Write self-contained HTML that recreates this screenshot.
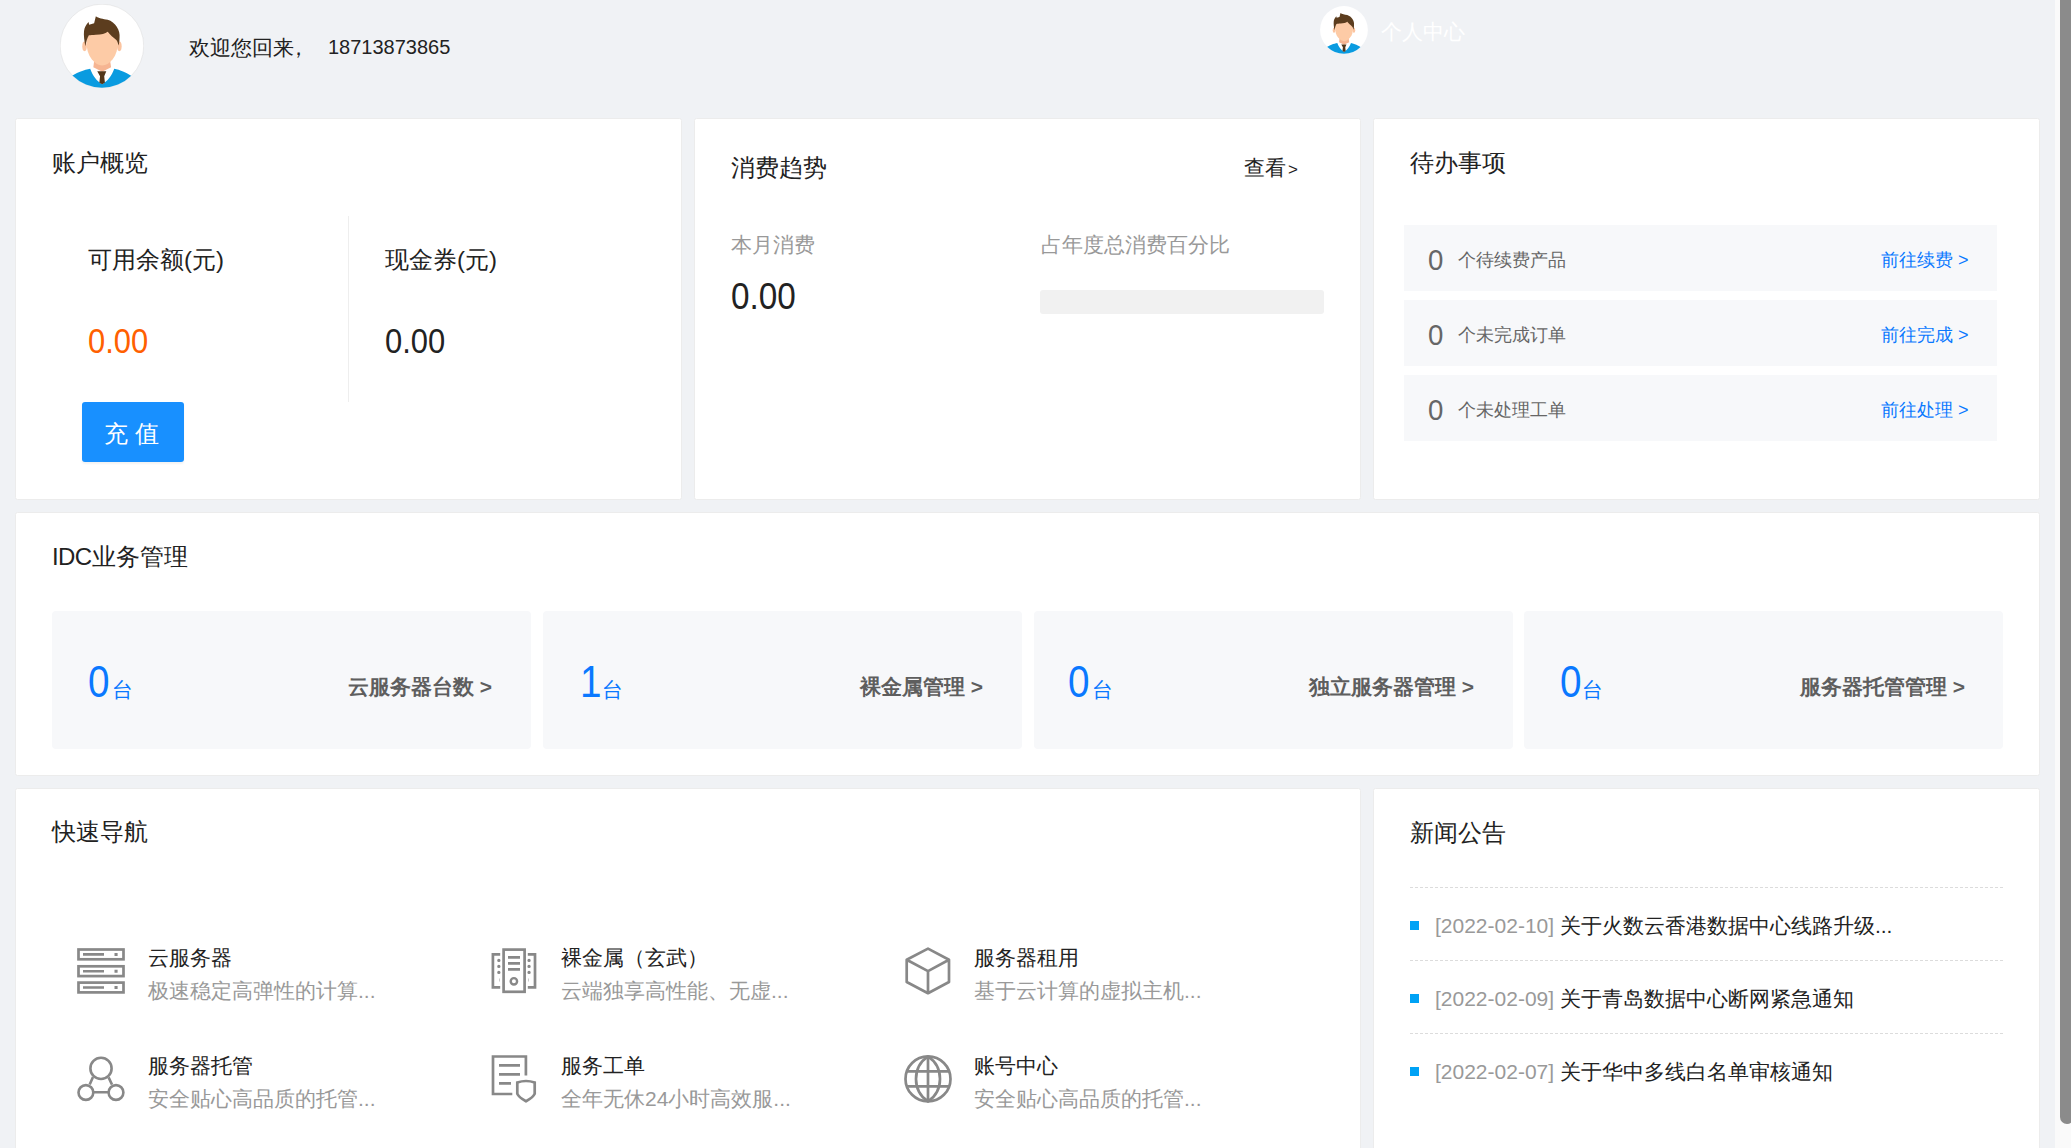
<!DOCTYPE html>
<html><head><meta charset="utf-8">
<style>
*{margin:0;padding:0;box-sizing:border-box}
html,body{width:2071px;height:1148px;overflow:hidden;background:#f0f2f5}
body{position:relative;font-family:"Liberation Sans",sans-serif;color:#333}
.a{position:absolute;white-space:nowrap;line-height:1}
.card{position:absolute;background:#fff;border:1px solid #ececec;border-radius:2.5px}
.t24{font-size:24px;color:#222}
.sb{position:absolute;left:2055px;top:0;width:16px;height:1148px;background:#fafafa}
.th{position:absolute;left:2060px;top:-10px;width:14px;height:1134px;background:#8b8b8b;border-radius:7px}
.row{position:absolute;left:1404px;width:593px;height:66px;background:#f7f8fa}
.box{position:absolute;top:611px;width:479px;height:138px;background:#f7f8fa;border-radius:4px}
.blue{color:#0a78ff}
.dash{position:absolute;left:1410px;width:593px;height:0;border-top:1px dashed #dcdcdc}
.sq{position:absolute;left:1410px;width:9px;height:9px;background:#00a2f5}
</style></head><body>

<!-- header -->
<svg class="a" style="left:60px;top:4px" width="84" height="84" viewBox="115 45 965 965">
 <defs><clipPath id="c1"><circle cx="597" cy="527" r="480"/></clipPath></defs>
 <circle cx="597" cy="527" r="480" fill="#fff" stroke="#dcdcdc" stroke-width="6"/>
 <g clip-path="url(#c1)">
  <path d="M200,905 C300,830 400,800 462,788 C490,870 540,930 599,968 C660,930 710,870 738,788 C800,800 880,830 990,905 L990,1100 L200,1100Z" fill="#0a9be0"/>
  <path d="M508,690 L690,690 L702,772 L600,822 L498,772Z" fill="#f6b592"/>
  <path d="M543,819 L647,819 L623,875 L631,950 L599,968 L567,950 L575,875Z" fill="#52361a"/>
  <ellipse cx="397" cy="531" rx="26" ry="56" fill="#fbc4a0"/>
  <ellipse cx="797" cy="531" rx="26" ry="56" fill="#fbc4a0"/>
  <path d="M418,470 C418,560 440,630 480,680 C520,728 555,752 599,752 C643,752 680,728 720,680 C760,630 780,560 780,470 C780,400 720,360 599,360 C480,360 418,400 418,470Z" fill="#fdcba6"/>
  <path d="M407,531 C395,470 385,400 391,355 C395,315 415,285 443,252 L450,282 L507,267 L527,187 C555,212 610,217 663,227 C705,240 745,270 767,307 C795,345 803,395 799,430 C798,470 795,500 787,523 C780,485 770,462 759,455 C730,430 690,400 663,363 C635,385 590,398 527,398 C490,400 465,402 447,405 C428,435 415,480 407,531Z" fill="#5c3d1e"/>
 </g>
</svg>
<div class="a" style="left:189px;top:37px;font-size:21px;color:#222">欢迎您回来</div><div class="a" style="left:288px;top:37px;font-size:21px;color:#222">，</div><div class="a" style="left:328px;top:37px;font-size:20px;color:#222">18713873865</div>

<svg class="a" style="left:1320px;top:6px" width="48" height="48" viewBox="115 45 965 965">
 <defs><clipPath id="c2"><circle cx="597" cy="527" r="480"/></clipPath></defs>
 <circle cx="597" cy="527" r="480" fill="#fff"/>
 <g clip-path="url(#c2)">
  <path d="M200,905 C300,830 400,800 462,788 C490,870 540,930 599,968 C660,930 710,870 738,788 C800,800 880,830 990,905 L990,1100 L200,1100Z" fill="#0a9be0"/>
  <path d="M508,690 L690,690 L702,772 L600,822 L498,772Z" fill="#f6b592"/>
  <path d="M543,819 L647,819 L623,875 L631,950 L599,968 L567,950 L575,875Z" fill="#52361a"/>
  <ellipse cx="397" cy="531" rx="26" ry="56" fill="#fbc4a0"/>
  <ellipse cx="797" cy="531" rx="26" ry="56" fill="#fbc4a0"/>
  <path d="M418,470 C418,560 440,630 480,680 C520,728 555,752 599,752 C643,752 680,728 720,680 C760,630 780,560 780,470 C780,400 720,360 599,360 C480,360 418,400 418,470Z" fill="#fdcba6"/>
  <path d="M407,531 C395,470 385,400 391,355 C395,315 415,285 443,252 L450,282 L507,267 L527,187 C555,212 610,217 663,227 C705,240 745,270 767,307 C795,345 803,395 799,430 C798,470 795,500 787,523 C780,485 770,462 759,455 C730,430 690,400 663,363 C635,385 590,398 527,398 C490,400 465,402 447,405 C428,435 415,480 407,531Z" fill="#5c3d1e"/>
 </g>
</svg>
<div class="a" style="left:1381px;top:21px;font-size:21px;color:#fff">个人中心</div>

<!-- row 1 -->
<div class="card" style="left:15px;top:118px;width:667px;height:382px"></div>
<div class="card" style="left:694px;top:118px;width:667px;height:382px"></div>
<div class="card" style="left:1373px;top:118px;width:667px;height:382px"></div>

<div class="a t24" style="left:52px;top:151px">账户概览</div>
<div class="a" style="left:88px;top:248px;font-size:24px;color:#222">可用余额(元)</div>
<div class="a" style="left:88px;top:323px;font-size:35px;color:#ff6000;transform:scaleX(.884);transform-origin:0 0">0.00</div>
<div class="a" style="left:348px;top:216px;width:1px;height:186px;background:#eee"></div>
<div class="a" style="left:385px;top:248px;font-size:24px;color:#222">现金券(元)</div>
<div class="a" style="left:385px;top:323px;font-size:35px;color:#222;transform:scaleX(.884);transform-origin:0 0">0.00</div>
<div class="a" style="left:82px;top:402px;width:102px;height:60px;background:#1890ff;border-radius:3px;box-shadow:0 2px 2px rgba(0,0,0,.05);color:#fff;font-size:24px;text-align:center;line-height:64px;padding-right:3px">充 值</div>

<div class="a t24" style="left:731px;top:156px">消费趋势</div>
<div class="a" style="left:1244px;top:157px;font-size:21px;color:#222">查看<span style="font-size:17px;margin-left:2px">&gt;</span></div>
<div class="a" style="left:731px;top:234px;font-size:21px;color:#999">本月消费</div>
<div class="a" style="left:731px;top:278px;font-size:37px;color:#222;transform:scaleX(.9);transform-origin:0 0">0.00</div>
<div class="a" style="left:1041px;top:234px;font-size:21px;color:#999">占年度总消费百分比</div>
<div class="a" style="left:1040px;top:290px;width:284px;height:24px;background:#f1f1f1;border-radius:3px"></div>

<div class="a t24" style="left:1410px;top:151px">待办事项</div>
<div class="row" style="top:225px"></div>
<div class="row" style="top:300px"></div>
<div class="row" style="top:375px"></div>
<div class="a" style="left:1428px;top:245px;font-size:30px;color:#666;transform:scaleX(.92);transform-origin:0 0">0</div>
<div class="a" style="left:1458px;top:251px;font-size:18px;color:#666">个待续费产品</div>
<div class="a blue" style="left:1881px;top:251px;font-size:18px">前往续费 &gt;</div>
<div class="a" style="left:1428px;top:320px;font-size:30px;color:#666;transform:scaleX(.92);transform-origin:0 0">0</div>
<div class="a" style="left:1458px;top:326px;font-size:18px;color:#666">个未完成订单</div>
<div class="a blue" style="left:1881px;top:326px;font-size:18px">前往完成 &gt;</div>
<div class="a" style="left:1428px;top:395px;font-size:30px;color:#666;transform:scaleX(.92);transform-origin:0 0">0</div>
<div class="a" style="left:1458px;top:401px;font-size:18px;color:#666">个未处理工单</div>
<div class="a blue" style="left:1881px;top:401px;font-size:18px">前往处理 &gt;</div>

<!-- IDC -->
<div class="card" style="left:15px;top:512px;width:2025px;height:264px"></div>
<div class="a t24" style="left:52px;top:545px"><span style="letter-spacing:-0.6px">IDC</span>业务管理</div>
<div class="box" style="left:52px"></div>
<div class="box" style="left:543px"></div>
<div class="box" style="left:1034px"></div>
<div class="box" style="left:1524px"></div>

<div class="a blue" style="left:88px;top:660px;font-size:44px;transform:scaleX(.88);transform-origin:0 0">0</div><div class="a blue" style="left:112px;top:679px;font-size:21px">台</div>
<div class="a" style="left:348px;top:676px;font-size:21px;font-weight:bold;color:#5e5e5e">云服务器台数 &gt;</div>
<div class="a blue" style="left:580px;top:660px;font-size:44px;transform:scaleX(.88);transform-origin:0 0">1</div><div class="a blue" style="left:602px;top:679px;font-size:21px">台</div>
<div class="a" style="left:860px;top:676px;font-size:21px;font-weight:bold;color:#5e5e5e">裸金属管理 &gt;</div>
<div class="a blue" style="left:1068px;top:660px;font-size:44px;transform:scaleX(.88);transform-origin:0 0">0</div><div class="a blue" style="left:1092px;top:679px;font-size:21px">台</div>
<div class="a" style="left:1309px;top:676px;font-size:21px;font-weight:bold;color:#5e5e5e">独立服务器管理 &gt;</div>
<div class="a blue" style="left:1560px;top:660px;font-size:44px;transform:scaleX(.88);transform-origin:0 0">0</div><div class="a blue" style="left:1582px;top:679px;font-size:21px">台</div>
<div class="a" style="left:1800px;top:676px;font-size:21px;font-weight:bold;color:#5e5e5e">服务器托管管理 &gt;</div>

<!-- row 3 -->
<div class="card" style="left:15px;top:788px;width:1346px;height:380px"></div>
<div class="card" style="left:1373px;top:788px;width:667px;height:380px"></div>
<div class="a t24" style="left:52px;top:820px">快速导航</div>
<div class="a t24" style="left:1410px;top:821px">新闻公告</div>

<!-- nav icons -->
<svg class="a" style="left:0;top:0" width="2071" height="1148" fill="none" stroke="#888" stroke-width="2.7">
 <!-- server -->
 <rect x="78.5" y="949.5" width="45" height="9.8"/>
 <rect x="78.5" y="966.3" width="45" height="9.8"/>
 <rect x="78.5" y="982.6" width="45" height="9.8"/>
 <path d="M83,954.4H104M83,971.2H104M83,987.5H104" stroke-width="2.6"/>
 <path d="M114.5,954.4H117.6M114.5,971.2H117.6M114.5,987.5H117.6" stroke-width="3"/>
 <!-- hosting -->
 <circle cx="101" cy="1068.4" r="10.6" stroke-width="2.6"/>
 <circle cx="85.9" cy="1092.5" r="7.4" stroke-width="2.6"/>
 <circle cx="116" cy="1092.5" r="7.4" stroke-width="2.6"/>
 <path d="M93.3,1092.3H108.6M93,1077L89.7,1084.6M108.6,1077.4L112,1084.6" stroke-width="2.6"/>
 <!-- bare metal -->
 <rect x="503.6" y="949.6" width="21" height="42.2"/>
 <path d="M508,957.4H520M508,963.4H520M508,969.4H520"/>
 <circle cx="513.9" cy="981.3" r="3.2" stroke-width="2.4"/>
 <path d="M500.2,954.4H492.9V987.4H500.2M527.8,954.4H535V987.4H527.8"/>
 <path d="M498.8,960.4h0.1M498.8,966.4h0.1M498.8,972.4h0.1M529,960.4h0.1M529,966.4h0.1M529,972.4h0.1" stroke-width="3.2" stroke-linecap="round"/><path d="M499.5,978.5V981.5M528.5,978.5V981.5" stroke-width="0.8" stroke="#bbb"/>
 <!-- ticket -->
 <path d="M512.3,1094H493V1056.5H525.9V1075.5"/>
 <path d="M499,1065.4H520M499,1074.4H520M499,1083.3H511"/>
 <path d="M517.3,1082.5Q526,1079.5 534.7,1082.5V1093.7Q533,1097.5 526,1101.2Q519,1097.5 517.3,1093.7Z"/>
 <!-- cube -->
 <path d="M928,948.6L949,959.7V982L928,993.2L906.7,982V959.7Z M906.7,959.7L928,971.1L949,959.7M928,971.1V993.2" stroke-linejoin="round"/>
 <!-- globe -->
 <circle cx="928" cy="1078.9" r="22.5"/>
 <path d="M928,1056.4A27.1,27.1 0 0 1 928,1101.4A27.1,27.1 0 0 1 928,1056.4"/>
 <path d="M928,1056.4V1101.4M906.5,1071.4H949.5M906.5,1086.3H949.5"/>
</svg>

<div class="a" style="left:148px;top:947px;font-size:21px;color:#222">云服务器</div>
<div class="a" style="left:148px;top:980px;font-size:21px;color:#999">极速稳定高弹性的计算...</div>
<div class="a" style="left:148px;top:1055px;font-size:21px;color:#222">服务器托管</div>
<div class="a" style="left:148px;top:1088px;font-size:21px;color:#999">安全贴心高品质的托管...</div>

<div class="a" style="left:561px;top:947px;font-size:21px;color:#222">裸金属（玄武）</div>
<div class="a" style="left:561px;top:980px;font-size:21px;color:#999">云端独享高性能、无虚...</div>
<div class="a" style="left:561px;top:1055px;font-size:21px;color:#222">服务工单</div>
<div class="a" style="left:561px;top:1088px;font-size:21px;color:#999">全年无休24小时高效服...</div>

<div class="a" style="left:974px;top:947px;font-size:21px;color:#222">服务器租用</div>
<div class="a" style="left:974px;top:980px;font-size:21px;color:#999">基于云计算的虚拟主机...</div>
<div class="a" style="left:974px;top:1055px;font-size:21px;color:#222">账号中心</div>
<div class="a" style="left:974px;top:1088px;font-size:21px;color:#999">安全贴心高品质的托管...</div>

<!-- news -->
<div class="dash" style="top:887px"></div>
<div class="dash" style="top:960px"></div>
<div class="dash" style="top:1033px"></div>
<div class="sq" style="top:921px"></div>
<div class="sq" style="top:994px"></div>
<div class="sq" style="top:1067px"></div>
<div class="a" style="left:1435px;top:915px;font-size:21px;color:#999">[2022-02-10] <span style="color:#222">关于火数云香港数据中心线路升级...</span></div>
<div class="a" style="left:1435px;top:988px;font-size:21px;color:#999">[2022-02-09] <span style="color:#222">关于青岛数据中心断网紧急通知</span></div>
<div class="a" style="left:1435px;top:1061px;font-size:21px;color:#999">[2022-02-07] <span style="color:#222">关于华中多线白名单审核通知</span></div>

<div class="sb"></div>
<div class="th"></div>
</body></html>
